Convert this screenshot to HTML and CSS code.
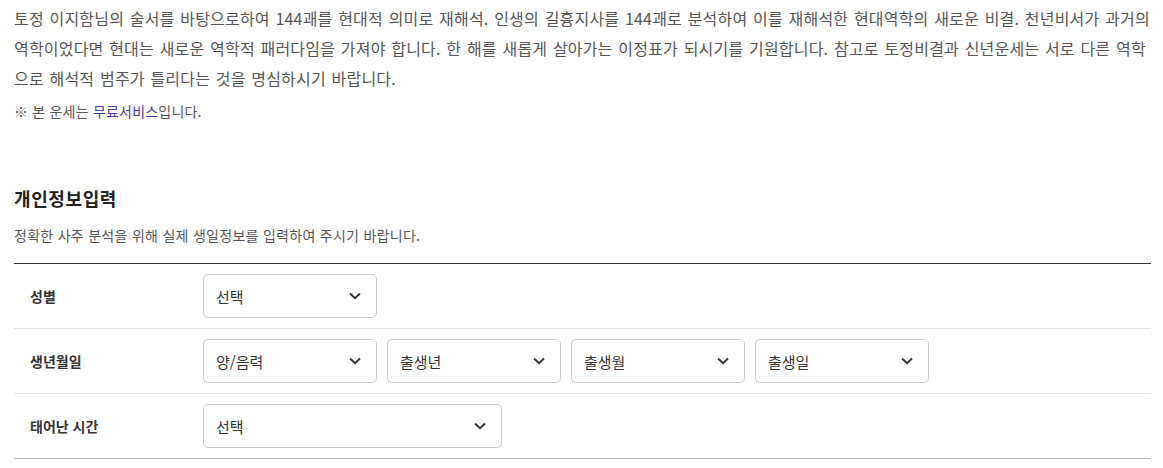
FILE: index.html
```html
<!DOCTYPE html>
<html lang="ko">
<head>
  <meta charset="UTF-8"/>
  <meta name="viewport" content="width=device-width, initial-scale=1.0"/>
  <title>토정비결</title>
  <link rel="stylesheet" href="styles.css"/>
</head>
<body>
  <main class="page">
    <section class="intro">
      <p class="intro-text">토정 이지함님의 술서를 바탕으로하여 144괘를 현대적 의미로 재해석. 인생의 길흉지사를 144괘로 분석하여 이를 재해석한 현대역학의 새로운 비결. 천년비서가 과거의 역학이었다면 현대는 새로운 역학적 패러다임을 가져야 합니다. 한 해를 새롭게 살아가는 이정표가 되시기를 기원합니다. 참고로 토정비결과 신년운세는 서로 다른 역학으로 해석적 범주가 틀리다는 것을 명심하시기 바랍니다.</p>
      <p class="intro-note">※ 본 운세는 <a href="#" class="free-link">무료서비스</a>입니다.</p>
    </section>

    <!-- 개인정보 입력 -->
    <section class="info">
      <h2 class="info-title">개인정보입력</h2>
      <p class="info-desc">정확한 사주 분석을 위해 실제 생일정보를 입력하여 주시기 바랍니다.</p>

      <div class="form-table">
        <div class="form-row">
          <div class="form-label">성별</div>
          <div class="form-fields">
            <div class="select-box">
              <span>선택</span>
              <svg class="chevron" width="12" height="8" viewBox="0 0 12 8"><path d="M1 1.5 6 6.2 11 1.5" fill="none" stroke="#333" stroke-width="2"/></svg>
            </div>
          </div>
        </div>

        <div class="form-row">
          <div class="form-label">생년월일</div>
          <div class="form-fields">
            <div class="select-box">
              <span>양/음력</span>
              <svg class="chevron" width="12" height="8" viewBox="0 0 12 8"><path d="M1 1.5 6 6.2 11 1.5" fill="none" stroke="#333" stroke-width="2"/></svg>
            </div>
            <div class="select-box">
              <span>출생년</span>
              <svg class="chevron" width="12" height="8" viewBox="0 0 12 8"><path d="M1 1.5 6 6.2 11 1.5" fill="none" stroke="#333" stroke-width="2"/></svg>
            </div>
            <div class="select-box">
              <span>출생월</span>
              <svg class="chevron" width="12" height="8" viewBox="0 0 12 8"><path d="M1 1.5 6 6.2 11 1.5" fill="none" stroke="#333" stroke-width="2"/></svg>
            </div>
            <div class="select-box">
              <span>출생일</span>
              <svg class="chevron" width="12" height="8" viewBox="0 0 12 8"><path d="M1 1.5 6 6.2 11 1.5" fill="none" stroke="#333" stroke-width="2"/></svg>
            </div>
          </div>
        </div>

        <div class="form-row last">
          <div class="form-label">태어난 시간</div>
          <div class="form-fields">
            <div class="select-box wide">
              <span>선택</span>
              <svg class="chevron" width="12" height="8" viewBox="0 0 12 8"><path d="M1 1.5 6 6.2 11 1.5" fill="none" stroke="#333" stroke-width="2"/></svg>
            </div>
          </div>
        </div>
      </div>
    </section>
  </main>
</body>
</html>
```

FILE: styles.css
```css
:root {
  --text-color:  #555;
  --dark:        #222;
  --line:        #e3e3e3;
  --link-color:  #4a3aa8;
  --font-family: "Noto Sans CJK KR", "Noto Sans", sans-serif;
}

* {
  box-sizing: border-box;
  margin: 0;
  padding: 0;
}

body {
  background: #fff;
  color: var(--text-color);
  font-family: var(--font-family);
}

.page {
  padding: 3px 12px 0 14px;
}

/* Intro */
.intro-text {
  font-size: 16px;
  line-height: 30px;
  letter-spacing: 0.2px;
  word-spacing: 1px;
}
.intro-note {
  margin-top: 8px;
  font-size: 14px;
  line-height: 20px;
  letter-spacing: 0.2px;
}
.free-link {
  color: var(--link-color);
  text-decoration: none;
}

/* Info section */
.info {
  margin-top: 65px;
}
.info-title {
  font-size: 18px;
  line-height: 24px;
  font-weight: 700;
  letter-spacing: 0.6px;
  color: var(--dark);
}
.info-desc {
  margin-top: 15px;
  font-size: 14px;
  line-height: 20px;
  letter-spacing: 0.28px;
}

/* Form table */
.form-table {
  margin-top: 18px;
  border-top: 1px solid #333;
  border-bottom: 1px solid #bbb;
}
.form-row {
  display: grid;
  grid-template-columns: 189px 1fr;
  align-items: center;
  height: 65px;
  border-bottom: 1px solid var(--line);
}
.form-row.last {
  border-bottom: none;
  height: 64px;
}
.form-label {
  padding-left: 16px;
  font-size: 14px;
  font-weight: 700;
  color: #333;
}
.form-fields {
  display: flex;
  gap: 10px;
}

.select-box {
  display: flex;
  align-items: center;
  justify-content: space-between;
  width: 174px;
  height: 44px;
  padding: 0 15px 0 12px;
  border: 1px solid #ccc;
  border-radius: 5px;
  font-size: 15px;
  color: #333;
  background: #fff;
}
.select-box.wide { width: 299px; }
.chevron { display: block; }
```
